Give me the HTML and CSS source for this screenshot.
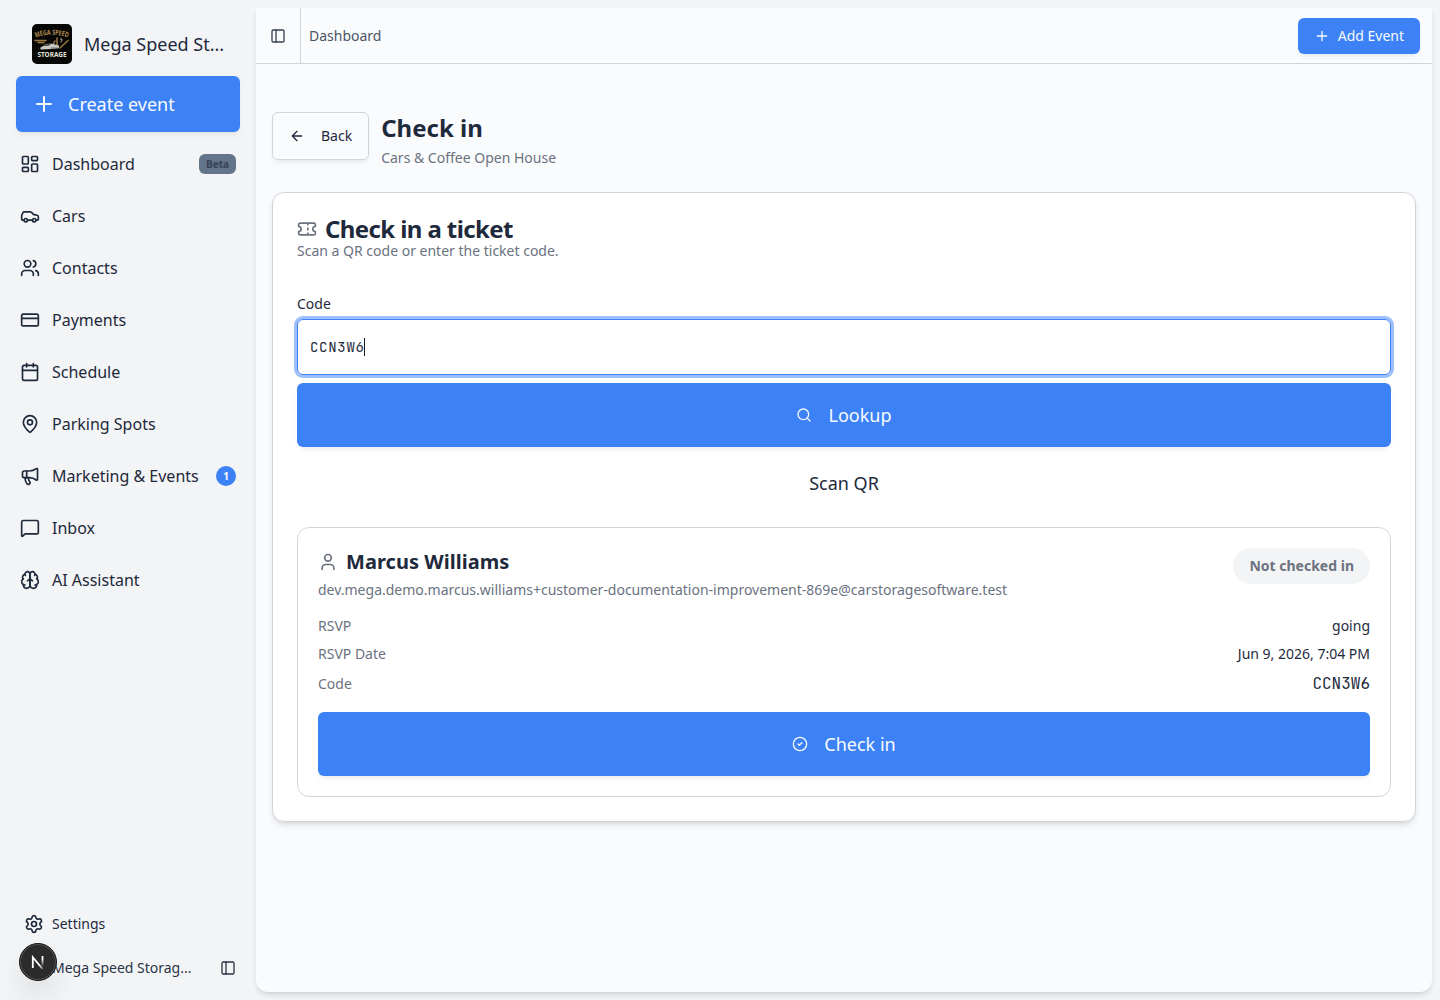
FILE: index.html
```html
<!DOCTYPE html>
<html lang="en">
<head>
<meta charset="utf-8">
<title>Check in</title>
<link rel="stylesheet" href="styles.css">
</head>
<body>
<div class="app">
  <aside class="sidebar">
    <div class="brand">
      <svg class="logo" viewBox="0 0 40 40">
        <rect width="40" height="40" rx="5" fill="#070806"/>
        <path id="arch" d="M3.500 13.500Q20 8 36.500 13.500" fill="none"/>
        <text class="logo-top"><textPath href="#arch" textLength="33" lengthAdjust="spacingAndGlyphs">MEGA SPEED</textPath></text>
        <path d="M3 16.500h11M6 18.500h6M28 24l8-7.500M25 14v7M23 17l-2 4" stroke="#987747" stroke-width="1.500" fill="none"/>
        <path d="M28.500 15q2-1 1.500 1l-1 2" stroke="#ddd6c4" stroke-width=".8" fill="none"/>
        <path d="M8 24l3-2 6-.5 2-2 4 1 4 1v2.500l-8 1-10 .5z" fill="#c9c9c4"/>
        <path d="M12 21l6-1M19 24h7" stroke="#77736a" stroke-width="1"/>
        <text class="logo-bottom" x="5.500" y="33" textLength="29" lengthAdjust="spacingAndGlyphs">STORAGE</text>
      </svg>
      <span class="brand-name">Mega Speed St...</span>
    </div>
    <button class="btn create"><svg class="i24" viewBox="0 0 24 24"><path d="M5 12h14M12 5v14"/></svg><span>Create event</span></button>
    <nav class="nav">
      <a><svg viewBox="0 0 24 24"><rect width="7" height="9" x="3" y="3" rx="1"/><rect width="7" height="5" x="14" y="3" rx="1"/><rect width="7" height="9" x="14" y="12" rx="1"/><rect width="7" height="5" x="3" y="16" rx="1"/></svg><span>Dashboard</span><b class="beta">Beta</b></a>
      <a><svg viewBox="0 0 24 24"><path d="M19 17h2c.6 0 1-.4 1-1v-3c0-.9-.7-1.700-1.500-1.900C18.700 10.600 16 10 16 10s-1.300-1.400-2.200-2.300c-.5-.4-1.100-.7-1.800-.7H5c-.6 0-1.100.4-1.400.9l-1.400 2.900A3.700 3.700 0 0 0 2 12v4c0 .6.4 1 1 1h2"/><circle cx="7" cy="17" r="2"/><path d="M9 17h6"/><circle cx="17" cy="17" r="2"/></svg><span>Cars</span></a>
      <a><svg viewBox="0 0 24 24"><path d="M16 21v-2a4 4 0 0 0-4-4H6a4 4 0 0 0-4 4v2"/><circle cx="9" cy="7" r="4"/><path d="M22 21v-2a4 4 0 0 0-3-3.870M16 3.130a4 4 0 0 1 0 7.750"/></svg><span>Contacts</span></a>
      <a><svg viewBox="0 0 24 24"><rect width="20" height="14" x="2" y="5" rx="2"/><path d="M2 10h20"/></svg><span>Payments</span></a>
      <a><svg viewBox="0 0 24 24"><path d="M8 2v4M16 2v4"/><rect width="18" height="18" x="3" y="4" rx="2"/><path d="M3 10h18"/></svg><span>Schedule</span></a>
      <a><svg viewBox="0 0 24 24"><path d="M20 10c0 4.993-5.539 10.193-7.399 11.799a1 1 0 0 1-1.202 0C9.539 20.193 4 14.993 4 10a8 8 0 0 1 16 0"/><circle cx="12" cy="10" r="3"/></svg><span>Parking Spots</span></a>
      <a><svg viewBox="0 0 24 24"><path d="M11 6a13 13 0 0 0 8.400-2.800A1 1 0 0 1 21 4v12a1 1 0 0 1-1.600.8A13 13 0 0 0 11 14H5a2 2 0 0 1-2-2V8a2 2 0 0 1 2-2z"/><path d="M6 14a12 12 0 0 0 2.400 7.200 2 2 0 0 0 3.200-2.400A8 8 0 0 1 10 14M8 6v8"/></svg><span>Marketing &amp; Events</span><b class="count">1</b></a>
      <a><svg viewBox="0 0 24 24"><path d="M22 17a2 2 0 0 1-2 2H6.828a2 2 0 0 0-1.414.586l-2.202 2.202A.71.71 0 0 1 2 21.286V5a2 2 0 0 1 2-2h16a2 2 0 0 1 2 2z"/></svg><span>Inbox</span></a>
      <a><svg viewBox="0 0 24 24"><path d="M12 5a3 3 0 1 0-5.997.125 4 4 0 0 0-2.526 5.770 4 4 0 0 0 .556 6.588A4 4 0 1 0 12 18Z"/><path d="M12 5a3 3 0 1 1 5.997.125 4 4 0 0 1 2.526 5.770 4 4 0 0 1-.556 6.588A4 4 0 1 1 12 18Z"/><path d="M15 13a4.500 4.500 0 0 1-3-4 4.500 4.500 0 0 1-3 4M17.599 6.500a3 3 0 0 0 .399-1.375M6.003 5.125A3 3 0 0 0 6.401 6.500M3.477 10.896a4 4 0 0 1 .585-.396M19.938 10.500a4 4 0 0 1 .585.396M6 18a4 4 0 0 1-1.967-.516M19.967 17.484A4 4 0 0 1 18 18"/></svg><span>AI Assistant</span></a>
    </nav>
    <footer class="side-foot">
      <a class="settings"><svg class="i20" viewBox="0 0 24 24"><path d="M9.671 4.136a2.340 2.340 0 0 1 4.659 0 2.340 2.340 0 0 0 3.319 1.915 2.340 2.340 0 0 1 2.330 4.033 2.340 2.340 0 0 0 0 3.831 2.340 2.340 0 0 1-2.330 4.033 2.340 2.340 0 0 0-3.319 1.915 2.340 2.340 0 0 1-4.659 0 2.340 2.340 0 0 0-3.320-1.915 2.340 2.340 0 0 1-2.330-4.033 2.340 2.340 0 0 0 0-3.831A2.340 2.340 0 0 1 6.350 6.051a2.340 2.340 0 0 0 3.319-1.915"/><circle cx="12" cy="12" r="3"/></svg><span>Settings</span></a>
      <div class="account"><span>Mega Speed Storag...</span><svg class="i16" viewBox="0 0 24 24"><rect width="18" height="18" x="3" y="3" rx="2"/><path d="M9 3v18"/></svg>
        <div class="dev-badge"><svg viewBox="0 0 36 36"><defs><linearGradient id="fade1" gradientUnits="userSpaceOnUse" x1="12" y1="12" x2="23" y2="25"><stop offset=".7" stop-color="#fff"/><stop offset="1" stop-color="#fff" stop-opacity=".3"/></linearGradient><linearGradient id="fade2" x1="0" y1="0" x2="0" y2="1"><stop offset=".3" stop-color="#fff"/><stop offset="1" stop-color="#fff" stop-opacity=".1"/></linearGradient></defs><path d="M12.800 24V13.200L22.600 25" fill="none" stroke="url(#fade1)" stroke-width="1.800" stroke-linecap="butt" stroke-linejoin="miter"/><rect x="21.600" y="12" width="1.800" height="10" stroke="none" fill="url(#fade2)"/></svg></div>
      </div>
    </footer>
  </aside>
  <main class="panel">
    <header class="topbar">
      <button class="toggle"><svg class="i16" viewBox="0 0 24 24"><rect width="18" height="18" x="3" y="3" rx="2"/><path d="M9 3v18"/></svg></button>
      <span class="crumb">Dashboard</span>
      <button class="btn add"><svg class="i16" viewBox="0 0 24 24"><path d="M5 12h14M12 5v14"/></svg><span>Add Event</span></button>
    </header>
    <div class="content">
      <div class="page-head">
        <button class="back"><svg class="i16" viewBox="0 0 24 24"><path d="m12 19-7-7 7-7M19 12H5"/></svg><span>Back</span></button>
        <div><h1>Check in</h1><p class="muted">Cars &amp; Coffee Open House</p></div>
      </div>
      <section class="card">
        <h2><svg class="i20" viewBox="0 0 24 24"><path d="M2 9a3 3 0 0 1 0 6v2a2 2 0 0 0 2 2h16a2 2 0 0 0 2-2v-2a3 3 0 0 1 0-6V7a2 2 0 0 0-2-2H4a2 2 0 0 0-2 2ZM13 5v2M13 17v2M13 11v2"/></svg><span>Check in a ticket</span></h2>
        <p class="muted">Scan a QR code or enter the ticket code.</p>
        <div class="label">Code</div>
        <div class="field"><span>CCN3W6</span><i class="caret"></i></div>
        <button class="btn big"><svg class="i16" viewBox="0 0 24 24"><circle cx="11" cy="11" r="8"/><path d="m21 21-4.300-4.300"/></svg><span>Lookup</span></button>
        <button class="scan">Scan QR</button>
        <div class="ticket">
          <div class="person">
            <div>
              <h3><svg class="i20" viewBox="0 0 24 24"><path d="M19 21v-2a4 4 0 0 0-4-4H9a4 4 0 0 0-4 4v2"/><circle cx="12" cy="7" r="4"/></svg><span>Marcus Williams</span></h3>
              <p class="muted">dev.mega.demo.marcus.williams+customer-documentation-improvement-869e@carstoragesoftware.test</p>
            </div>
            <span class="pill">Not checked in</span>
          </div>
          <dl>
            <div><dt>RSVP</dt><dd>going</dd></div>
            <div><dt>RSVP Date</dt><dd>Jun 9, 2026, 7:04 PM</dd></div>
            <div class="code-row"><dt>Code</dt><dd class="mono">CCN3W6</dd></div>
          </dl>
          <button class="btn big"><svg class="i16" viewBox="0 0 24 24"><circle cx="12" cy="12" r="10"/><path d="m9 12 2 2 4-4"/></svg><span>Check in</span></button>
        </div>
      </section>
    </div>
  </main>
</div>
</body>
</html>
```
FILE: styles.css
```css
* { box-sizing: border-box; margin: 0; padding: 0; }
body { background: #f3f4f6; color: #1e293b; font: 14px/20px "Noto Sans", sans-serif; }
button { font: inherit; color: inherit; border: 0; background: none; }
svg { display: block; flex: none; fill: none; stroke: currentColor; stroke-width: 2; stroke-linecap: round; stroke-linejoin: round; }
.i16 { width: 16px; height: 16px; }
.i20 { width: 20px; height: 20px; }
.i24 { width: 24px; height: 24px; }
.app { display: flex; height: 1000px; overflow: hidden; }
.sidebar { width: 256px; flex: none; display: flex; flex-direction: column; padding: 16px 16px 8px; background: #f3f4f6; }
.brand { display: flex; align-items: center; gap: 12px; height: 56px; padding: 0 16px; margin-bottom: 4px; }
.logo { width: 40px; height: 40px; stroke: none; }
.logo-top { font: bold 7px "Noto Sans", sans-serif; fill: #b28b52; }
.logo-bottom { font: bold 7px "Noto Sans", sans-serif; fill: #e4e1d8; }
.brand-name { font-size: 18px; line-height: 28px; white-space: nowrap; }
.btn { display: flex; align-items: center; background: #3c82f6; color: #f8fafc; border-radius: 6px; box-shadow: 0 4px 6px -1px rgba(0,0,0,.05), 0 2px 4px -2px rgba(0,0,0,.05); }
.create { height: 56px; flex: none; gap: 12px; padding: 0 16px; font-size: 18px; }
.nav { display: flex; flex-direction: column; gap: 4px; padding-top: 8px; }
.nav a { display: flex; align-items: center; gap: 12px; height: 48px; padding: 0 4px; font-size: 16px; line-height: 24px; white-space: nowrap; }
.nav svg { width: 20px; height: 20px; }
.nav b { margin-left: auto; height: 20px; font-size: 10px; line-height: 20px; text-align: center; }
.beta { width: 37px; border-radius: 6px; background: #64748b; color: #364255; }
.count { width: 20px; border-radius: 10px; background: #3c82f6; color: #fff; }
.side-foot { margin-top: auto; }
.settings { display: flex; align-items: center; gap: 8px; height: 40px; padding: 0 8px; }
.account { position: relative; display: flex; align-items: center; justify-content: space-between; height: 48px; padding: 0 4px 0 36px; color: #2b3547; }
.dev-badge { position: absolute; left: 3px; top: -1px; width: 38px; height: 38px; border-radius: 50%; background: #2b2b2b; border: 1px solid #171717; box-shadow: inset 0 0 0 1px #555, 0 16px 32px -8px rgba(0,0,0,.24); }
.dev-badge svg { width: 36px; height: 36px; }
.panel { flex: 1; min-width: 0; margin: 8px 8px 8px 0; border-radius: 0 0 12px 12px; background: #fafbfd; box-shadow: 0 4px 6px -1px rgba(0,0,0,.1), 0 2px 4px -2px rgba(0,0,0,.1); }
.topbar { display: flex; align-items: center; height: 56px; padding-right: 12px; border-bottom: 1px solid #d1d5db; color: #4b5563; }
.toggle { display: flex; align-items: center; width: 45px; height: 55px; padding-left: 14px; border-right: 1px solid #d1d5db; color: #374151; }
.crumb { padding-left: 8px; }
.add { height: 36px; margin-left: auto; padding: 0 16px; gap: 8px; }
.content { padding: 48px 16px; }
.page-head { display: flex; gap: 12px; margin-bottom: 24px; height: 56px; }
.back { display: flex; align-items: center; gap: 16px; height: 48px; padding: 0 16px; border: 1px solid #d1d5db; border-radius: 6px; box-shadow: 0 4px 6px -1px rgba(0,0,0,.05), 0 2px 4px -2px rgba(0,0,0,.05); }
h1 { font-size: 24px; line-height: 32px; margin-bottom: 4px; letter-spacing: 0; }
.muted, dt { color: #6b7280; }
.card { padding: 24px; height: 630px; border: 1px solid #d1d5db; border-radius: 12px; background: #fff; box-shadow: 0 4px 6px -1px rgba(0,0,0,.1), 0 2px 4px -2px rgba(0,0,0,.1); }
h2 { display: flex; align-items: center; gap: 8px; font-size: 24px; line-height: 24px; letter-spacing: -.6px; }
h2 svg, h3 svg { color: #6b7280; }
.label { margin: 33px 0 5px; }
.field { display: flex; align-items: center; height: 56px; padding: 0 12px; border: 1px solid #3c82f6; border-radius: 6px; box-shadow: 0 0 0 3px rgba(60,130,246,.5); font-family: "JetBrains Mono", "DejaVu Sans Mono", monospace; letter-spacing: .7px; }
.caret { width: 1px; height: 18px; margin-left: -1px; background: #111827; }
.big { width: 100%; height: 64px; justify-content: center; gap: 16px; font-size: 18px; line-height: 28px; }
.field + .big { margin-top: 8px; }
.scan { display: block; width: 100%; height: 56px; margin: 8px 0 16px; font-size: 18px; line-height: 28px; }
.ticket { padding: 20px; height: 270px; border: 1px solid #d1d5db; border-radius: 12px; }
.person { display: flex; justify-content: space-between; align-items: flex-start; }
h3 { display: flex; align-items: center; gap: 8px; font-size: 20px; line-height: 28px; margin-bottom: 4px; letter-spacing: .05px; }
.pill { height: 36px; padding: 0 16px; border-radius: 18px; background: #f3f4f6; color: #6b7280; font-weight: 700; line-height: 36px; }
dl { display: flex; flex-direction: column; gap: 8px; margin: 16px 0; }
dl div { display: flex; justify-content: space-between; align-items: center; }
.code-row { height: 24px; }
.mono { font: 16px/24px "JetBrains Mono", "DejaVu Sans Mono", monospace; }
```
